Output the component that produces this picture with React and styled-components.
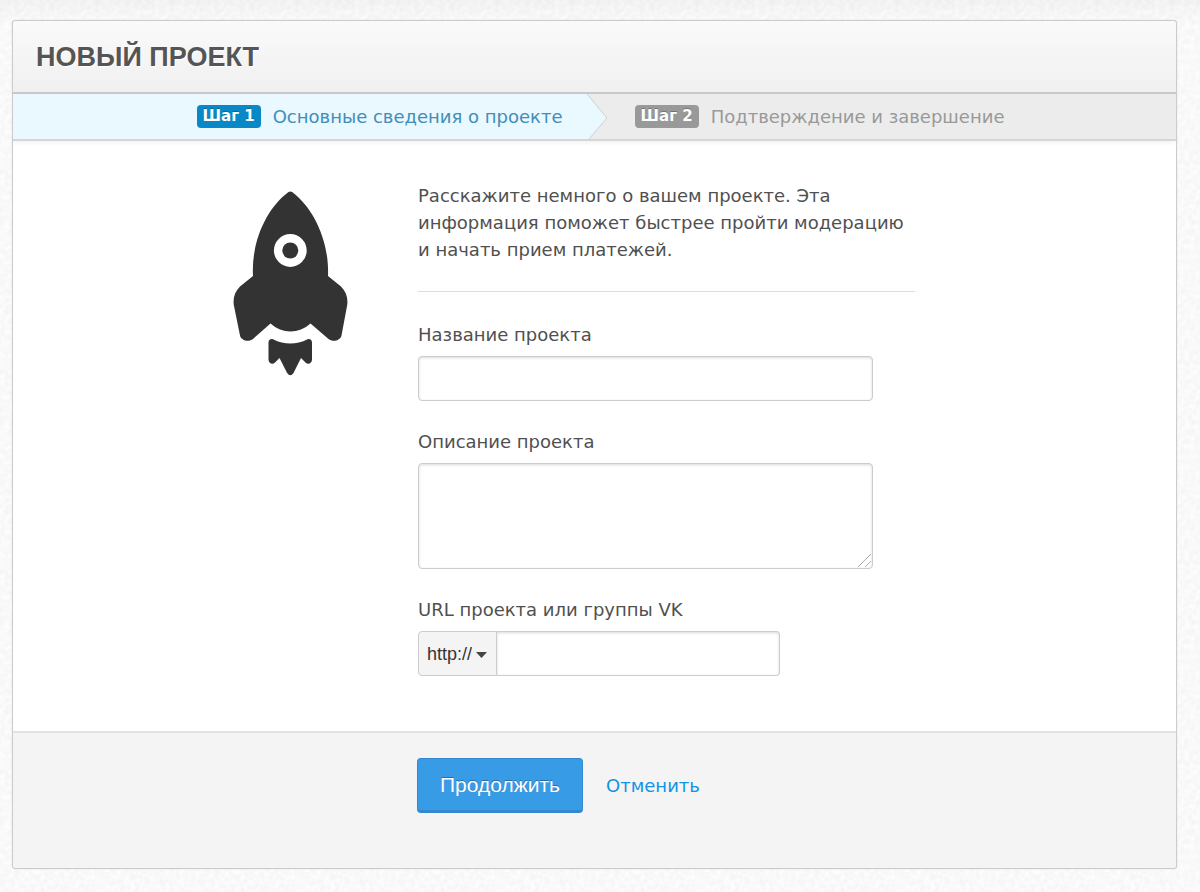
import styled, { createGlobalStyle } from 'styled-components';

const theme = {
  text: '#505050',
  border: '#cccccc',
  blue: '#0888c7',
  link: '#1193e6',
  sans: '"Liberation Sans", Arial, sans-serif',
  body: '"DejaVu Sans", Verdana, sans-serif',
};

const paper = encodeURIComponent(
  `<svg xmlns="http://www.w3.org/2000/svg" width="200" height="200">
    <filter id="n" x="0" y="0" width="100%" height="100%">
      <feTurbulence type="fractalNoise" baseFrequency="0.2" numOctaves="3" stitchTiles="stitch"/>
      <feColorMatrix values="0 0 0 0 0  0 0 0 0 0  0 0 0 0 0  0.06 0 0 0 -0.015"/>
    </filter>
    <rect width="200" height="200" filter="url(#n)"/>
  </svg>`
);

const grip = encodeURIComponent(
  `<svg xmlns="http://www.w3.org/2000/svg" width="15" height="15">
    <path d="M1 14L14 1M8 14L14 8" stroke="#aaa" fill="none"/>
  </svg>`
);

const GlobalStyle = createGlobalStyle`
  * {
    box-sizing: border-box;
  }

  body {
    margin: 0;
    background: #fdfdfd url("data:image/svg+xml,${paper}");
    color: ${theme.text};
    font-family: ${theme.body};
    font-size: 18px;
    line-height: 27px;
  }
`;

const Page = styled.div`
  padding: 20px 23px 23px 12px;
  background: linear-gradient(rgba(0, 0, 0, 0.03), transparent 24px);
`;

const Panel = styled.main`
  border: 1px solid ${theme.border};
  border-radius: 4px;
  overflow: hidden;
  background: white;
  box-shadow: 0 0 1px rgba(0, 0, 0, 0.3);
`;

const Header = styled.header`
  padding: 18px 23px 17px;
  border-bottom: 2px solid ${theme.border};
  background: linear-gradient(#fafafa, #f0f0f0);
`;

const Title = styled.h1`
  margin: 0;
  font-family: ${theme.sans};
  font-size: 27px;
  line-height: 36px;
  color: #555;
  text-shadow: 1px 1px 0 white;
  text-transform: uppercase;
`;

const Steps = styled.ol`
  display: grid;
  grid-template-columns: 1fr 1fr;
  margin: 0;
  padding: 0;
  list-style: none;
  background: #ececec;
  border-bottom: 2px solid #d6d6d6;
  box-shadow: 0 1px 5px rgba(0, 0, 0, 0.07);
`;

const Step = styled.li`
  position: relative;
  display: flex;
  align-items: center;
  gap: 12px;
  height: 45px;
  justify-content: ${({ $active }) => ($active ? 'flex-end' : 'flex-start')};
  padding: ${({ $active }) => ($active ? '0 32px 0 0' : '0 0 0 40px')};
  color: ${({ $active }) => ($active ? '#418fb9' : '#999')};
  background: ${({ $active }) => ($active ? '#eaf8ff' : 'transparent')};
`;

const Badge = styled.span`
  padding: 0 6px;
  border-radius: 4px;
  font-size: 15px;
  font-weight: bold;
  line-height: 23px;
  color: white;
  text-shadow: 0 -1px 0 rgba(0, 0, 0, 0.25);
  background: ${({ $active }) => ($active ? theme.blue : '#999')};
`;

const StepArrow = styled.svg`
  position: absolute;
  top: 0;
  left: 100%;
  margin-left: -8px;
  z-index: 1;
`;

const Content = styled.div`
  display: grid;
  grid-template-columns: 405px minmax(0, 497px);
  padding: 41px 0 55px;
`;

const Picture = styled.div`
  padding: 9px 70px 0 0;
  text-align: right;

  svg {
    fill: #333;
  }
`;

const Intro = styled.p`
  margin: 0 0 29px;
  padding-bottom: 28px;
  border-bottom: 1px solid #ddd;
`;

const Field = styled.div`
  display: flex;
  flex-direction: column;
  max-width: 455px;

  & + & {
    margin-top: 27px;
  }
`;

const Label = styled.label`
  margin-bottom: 8px;
`;

const Input = styled.input`
  width: 100%;
  height: 45px;
  padding: 8px;
  border: 1px solid ${theme.border};
  border-radius: 4px;
  background: white;
  box-shadow: inset 0 1px 3px rgba(0, 0, 0, 0.15);
  font: 18px ${theme.sans};
  color: ${theme.text};
`;

const TextArea = styled(Input)`
  display: block;
  height: 106px;
  resize: vertical;

  &::-webkit-resizer {
    background: url("data:image/svg+xml,${grip}") no-repeat right bottom;
  }
`;

const UrlGroup = styled.div`
  display: flex;
  max-width: 362px;
`;

const Protocol = styled.div`
  position: relative;
  flex: 0 0 79px;

  svg {
    position: absolute;
    top: 21px;
    right: 10px;
    fill: #444;
    pointer-events: none;
  }
`;

const Select = styled.select`
  width: 100%;
  height: 45px;
  padding: 0 24px 0 8px;
  border: 1px solid ${theme.border};
  border-radius: 4px 0 0 4px;
  appearance: none;
  background: #f4f4f4;
  font: 18px ${theme.sans};
  color: #333;
`;

const UrlInput = styled(Input)`
  border-left: 0;
  border-radius: 0 4px 4px 0;
`;

const Footer = styled.footer`
  display: flex;
  align-items: center;
  gap: 23px;
  padding: 25px 0 55px 404px;
  border-top: 2px solid #e2e2e2;
  background: #f4f4f4;
`;

const Submit = styled.button`
  height: 55px;
  padding: 0 22px;
  border: 1px solid #3388cf;
  border-bottom-width: 3px;
  border-radius: 4px;
  background: #389be5;
  font: 21px ${theme.sans};
  color: white;
  text-shadow: 0 -1px 0 rgba(0, 0, 0, 0.3);
`;

const Cancel = styled.a`
  color: ${theme.link};
  text-decoration: none;
`;

const Rocket = () => (
  <svg width="115" height="185" viewBox="14 10.500 115 185" aria-hidden="true">
    <path
      fillRule="evenodd"
      d="M69.500 11.500Q71.300 10.400 73.100 11.500C94 27 110.500 60 109 95.600L122 106C127 111 129 117 128.300 124L122.500 155C121.500 160 114 162 109.500 158.500L91.500 143C80 153.500 63 153.500 51.500 143L34 158.500C29.500 162 22 160 21 155L14.700 124C14 117 16 111 21 106L34 95.600C32 60 48.500 27 69.500 11.500ZM71.300 53.600A16.400 16.400 0 1 0 71.300 86.400A16.400 16.400 0 1 0 71.300 53.600Z"
    />
    <circle cx="71.300" cy="70" r="8" />
    <path d="M49.500 162C49.500 159.500 51.500 158 54 158.700Q71.300 167.500 88.600 158.700C91 158 93 159.500 93 162V179C93 183 89 184.500 86.500 182L82 177.500L74.500 192.500Q71.300 197 68.100 192.500L60.500 177.500L56 182C53.500 184.500 49.500 183 49.500 179Z" />
  </svg>
);

export default function App() {
  return (
    <>
      <GlobalStyle />
      <Page>
        <Panel>
          <Header>
            <Title>Новый проект</Title>
          </Header>
          <Steps>
            <Step $active>
              <Badge $active>Шаг 1</Badge>
              Основные сведения о проекте
              <StepArrow width="22" height="45" viewBox="0 0 22 45" aria-hidden="true">
                <path d="M0 0L20 24L2 45H0Z" fill="#eaf8ff" />
                <path d="M9 0H22V45H2L20 24L0 0Z" fill="#ececec" />
                <path d="M0 0L20 24L2 45" fill="none" stroke="#d0d0d0" />
              </StepArrow>
            </Step>
            <Step>
              <Badge>Шаг 2</Badge>
              Подтверждение и завершение
            </Step>
          </Steps>
          <form onSubmit={e => e.preventDefault()}>
            <Content>
              <Picture>
                <Rocket />
              </Picture>
              <div>
                <Intro>
                  Расскажите немного о вашем проекте. Эта информация поможет быстрее пройти
                  модерацию и начать прием платежей.
                </Intro>
                <Field>
                  <Label htmlFor="name">Название проекта</Label>
                  <Input id="name" type="text" />
                </Field>
                <Field>
                  <Label htmlFor="description">Описание проекта</Label>
                  <TextArea as="textarea" id="description" />
                </Field>
                <Field>
                  <Label htmlFor="url">URL проекта или группы VK</Label>
                  <UrlGroup>
                    <Protocol>
                      <Select aria-label="Протокол">
                        <option>http://</option>
                        <option>https://</option>
                      </Select>
                      <svg width="11" height="6" viewBox="0 0 11 6" aria-hidden="true">
                        <path d="M0 0H11L5.500 6Z" />
                      </svg>
                    </Protocol>
                    <UrlInput id="url" type="text" />
                  </UrlGroup>
                </Field>
              </div>
            </Content>
            <Footer>
              <Submit type="submit">Продолжить</Submit>
              <Cancel href="#">Отменить</Cancel>
            </Footer>
          </form>
        </Panel>
      </Page>
    </>
  );
}
